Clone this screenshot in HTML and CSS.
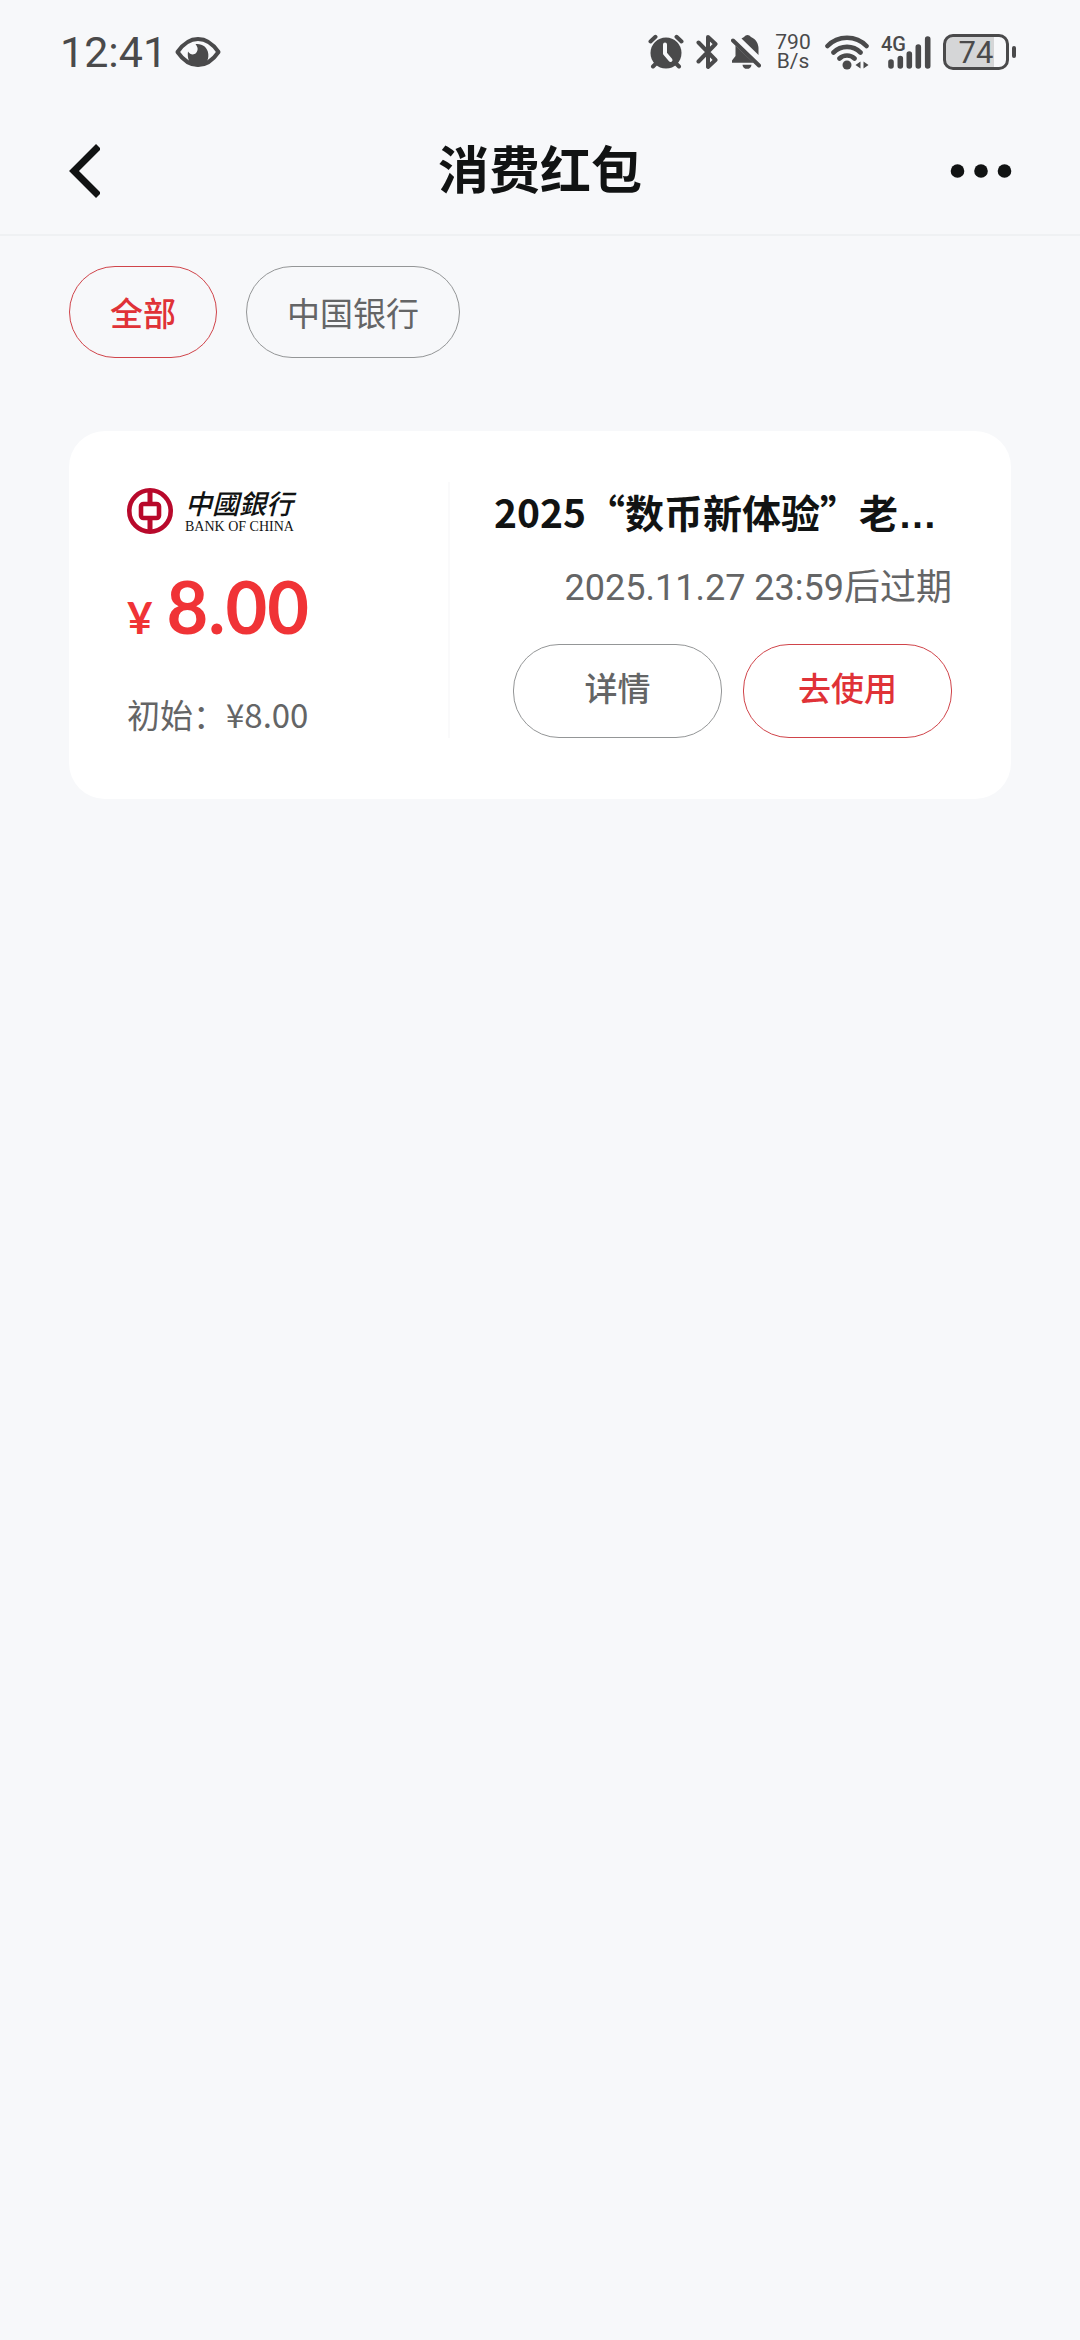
FILE: index.html
```html
<!DOCTYPE html>
<html lang="zh-CN">
<head>
<meta charset="utf-8">
<meta name="viewport" content="width=device-width, initial-scale=1">
<title>消费红包</title>
<link rel="stylesheet" href="styles.css">
</head>
<body>
<div class="status-bar">
  <div class="status-left">
    <span class="clock">12:41</span>
    <svg class="icon" width="46" height="32" viewBox="0 0 46 32" aria-hidden="true">
      <path d="M2.500 16C8 8 14 3 23 3S38 8 43.500 16C38 24 32 29 23 29S8 24 2.500 16Z" fill="none" stroke="currentColor" stroke-width="4" stroke-linejoin="round"/>
      <path d="M20.500 8.200C23 11 23.500 14 21 17C18.500 19.500 15 18.500 13 15.500C12 22 14 30 23 30.500C30 30 34 25 33.300 18C32.500 11 27 7.500 20.500 8.200Z" fill="currentColor"/>
    </svg>
  </div>
  <div class="status-right">
    <svg class="icon" width="36" height="36" viewBox="0 0 36 36" aria-hidden="true">
      <circle cx="18" cy="19" r="15.500" fill="currentColor"/>
      <path d="M2.500 7.500L7.500 2.800M33.500 7.500L28.500 2.800M5 32.500L9 28.500M31 32.500L27 28.500" stroke="currentColor" stroke-width="4" stroke-linecap="round"/>
      <path d="M17 10.500V19.500L22.500 26" fill="none" stroke="#f7f8fa" stroke-width="4" stroke-linecap="round" stroke-linejoin="round"/>
    </svg>
    <svg class="icon" width="23" height="36" viewBox="0 0 23 36" aria-hidden="true">
      <path d="M2.500 8.500L19.500 26L12 33V3L19.500 10L2.500 27.500" fill="none" stroke="currentColor" stroke-width="4" stroke-linecap="round" stroke-linejoin="round"/>
    </svg>
    <svg class="icon" width="30" height="36" viewBox="0 0 30 36" aria-hidden="true">
      <path d="M4.500 11.500V22L1 26.500V28.800H22.500Z" fill="currentColor"/>
      <path d="M10.500 4.500L13 3C15 0.200 18 0.200 20 3C25 5 27.500 10 27.500 14V21Z" fill="currentColor"/>
      <path d="M2 6.500L28 31.500" stroke="currentColor" stroke-width="4" stroke-linecap="round"/>
      <path d="M11.500 30.800H20.500A4.500 4 0 0 1 11.500 30.800Z" fill="currentColor"/>
    </svg>
    <span class="net-speed">790<br>B/s</span>
    <svg class="icon" width="44" height="36" viewBox="0 0 44 36" aria-hidden="true">
      <path d="M2.500 12C13 1 31 1 41.500 12M8.500 18.500C16 11 28 11 35.500 18.500M14.500 24.500C18.500 20.500 25.500 20.500 29.500 24.500" fill="none" stroke="currentColor" stroke-width="4.600" stroke-linecap="round"/>
      <circle cx="22" cy="31" r="4.500" fill="currentColor"/>
      <path d="M30.500 31L35.500 27.500V34.500ZM43.500 31L38.500 27.500V34.500Z" fill="currentColor"/>
    </svg>
    <svg class="icon signal" width="50" height="36" viewBox="0 0 50 36" role="img" aria-label="4G">
      <path d="M10 28V32M19.300 24.500V32M28.300 20V32M37.300 13V32M46.700 5V32" stroke="currentColor" stroke-width="5.600" stroke-linecap="round"/>
      <text class="signal-type" x="0" y="17">4G</text>
    </svg>
    <div class="battery"><span class="battery-body">74</span><span class="battery-cap"></span></div>
  </div>
</div>

<header class="nav">
  <button class="nav-button" type="button" aria-label="返回">
    <svg width="32" height="56" viewBox="0 0 32 56" aria-hidden="true"><path d="M30.500 3.500L6 28L30.500 52.500" fill="none" stroke="currentColor" stroke-width="7"/></svg>
  </button>
  <h1 class="nav-title">消费红包</h1>
  <button class="nav-button nav-more" type="button" aria-label="更多">
    <svg width="62" height="16" viewBox="0 0 62 16" aria-hidden="true"><g fill="currentColor"><circle cx="7.500" cy="8" r="6.800"/><circle cx="31" cy="8" r="6.800"/><circle cx="54.500" cy="8" r="6.800"/></g></svg>
  </button>
</header>

<main class="content">
  <div class="filters">
    <button class="pill pill-active" type="button">全部</button>
    <button class="pill" type="button">中国银行</button>
  </div>

  <article class="card">
    <section class="card-value">
      <div class="bank">
        <svg width="46" height="46" viewBox="0 0 46 46" aria-hidden="true">
          <g fill="none" stroke="currentColor">
            <circle cx="23" cy="23" r="20.700" stroke-width="4.600"/>
            <path d="M23 3V15M23 31V43" stroke-width="5"/>
            <rect x="14" y="16" width="18" height="14" rx="2.500" stroke-width="4.600"/>
          </g>
        </svg>
        <div class="bank-name">
          <span class="bank-zh" lang="zh-TW">中國銀行</span>
          <span class="bank-en" lang="en">BANK OF CHINA</span>
        </div>
      </div>
      <p class="amount"><span class="currency">¥</span><span>8.00</span></p>
      <p class="initial">初始：¥8.00</p>
    </section>
    <section class="card-info">
      <h2 class="card-title">2025“数币新体验”老<span class="dots">…</span></h2>
      <p class="expiry">2025.11.27 23:59后过期</p>
      <div class="actions">
        <button class="pill action" type="button">详情</button>
        <button class="pill pill-active action" type="button">去使用</button>
      </div>
    </section>
  </article>
</main>
</body>
</html>
```
FILE: styles.css
```css
* {
  box-sizing: border-box;
}

body {
  margin: 0;
  min-height: 100vh;
  background: #f7f8fa;
  color: #111313;
  font-family: "Noto Sans CJK SC", sans-serif;
}

h1, h2, p {
  margin: 0;
}

button {
  margin: 0;
  padding: 0;
  border: 0;
  background: none;
  color: inherit;
  font: inherit;
}

svg {
  display: block;
  flex: none;
}

.status-bar {
  display: flex;
  justify-content: space-between;
  align-items: center;
  height: 108px;
  padding: 0 64px 4px 60px;
  color: #4a4a4b;
  font-family: Roboto, sans-serif;
}

.status-left,
.status-right {
  display: flex;
  align-items: center;
  gap: 12px;
}

.clock {
  font-size: 43px;
  line-height: 52px;
}

.status-left {
  gap: 8px;
}

.net-speed {
  width: 40px;
  font-size: 21px;
  line-height: 19px;
  text-align: center;
}

.signal {
  overflow: visible;
}

.signal-type {
  fill: currentColor;
  font-size: 20px;
  font-weight: 500;
}

.battery {
  display: flex;
  align-items: center;
  gap: 3px;
}

.battery-body {
  width: 66px;
  height: 36px;
  border: 3px solid #4a4a4b;
  border-radius: 10px;
  background: linear-gradient(to right, #d5d6d7 80%, transparent 80%);
  font-size: 31px;
  line-height: 32px;
  text-align: center;
}

.battery-cap {
  width: 4px;
  height: 12px;
  border-radius: 2px;
  background: #4a4a4b;
}

.nav {
  display: grid;
  grid-template-columns: 1fr auto 1fr;
  align-items: center;
  height: 128px;
  padding: 0 68px;
  border-bottom: 2px solid #eff1f3;
}

.nav-button {
  justify-self: start;
}

.nav-more {
  justify-self: end;
}

.nav-title {
  padding-bottom: 8px;
  font-size: 51px;
  font-weight: 700;
  line-height: 72px;
}

.content {
  padding: 30px 69px;
}

.filters {
  display: flex;
  gap: 29px;
  margin-bottom: 73px;
}

.pill {
  height: 92px;
  padding: 0 40px;
  border: 1px solid #949697;
  border-radius: 46px;
  color: #646566;
  font-size: 33px;
  line-height: 48px;
}

.pill-active {
  border-color: #d0444a;
  color: #e03237;
  font-weight: 500;
}

.card {
  display: flex;
  padding: 51px 59px 61px 58px;
  border-radius: 36px;
  background: #fff;
}

.card-value {
  flex: 1;
  border-right: 2px solid #fafafb;
}

.bank {
  display: flex;
  align-items: center;
  gap: 12px;
  height: 58px;
  color: #b8092b;
}

.bank-name {
  display: flex;
  flex-direction: column;
  color: #111313;
}

.bank-zh {
  font-size: 27px;
  font-style: italic;
  font-weight: 500;
  line-height: 32px;
}

.bank-en {
  font-family: "Liberation Serif", serif;
  font-size: 14px;
  line-height: 16px;
}

.amount {
  display: flex;
  align-items: baseline;
  gap: 14px;
  margin-top: 28px;
  color: #f03336;
  font-family: Lato, sans-serif;
  font-size: 72px;
  font-weight: 700;
  line-height: 76px;
}

.currency {
  font-size: 44px;
  line-height: 48px;
}

.initial {
  margin-top: 46px;
  color: #646566;
  font-size: 33px;
  line-height: 48px;
}

.card-info {
  width: 502px;
  padding-left: 42px;
}

.card-title {
  overflow: hidden;
  padding-left: 2px;
  font-size: 39px;
  font-weight: 700;
  line-height: 58px;
  white-space: nowrap;
}

.dots {
  font-family: "Liberation Sans", sans-serif;
}

.expiry {
  margin-top: 20px;
  color: #646566;
  font-family: Roboto, "Noto Sans CJK SC", sans-serif;
  font-size: 36px;
  line-height: 48px;
  text-align: right;
}

.actions {
  display: flex;
  justify-content: flex-end;
  gap: 21px;
  margin-top: 32px;
}

.action {
  width: 209px;
  height: 94px;
  padding: 0 0 8px;
}

.pill.action:not(.pill-active) {
  font-weight: 500;
}
```
